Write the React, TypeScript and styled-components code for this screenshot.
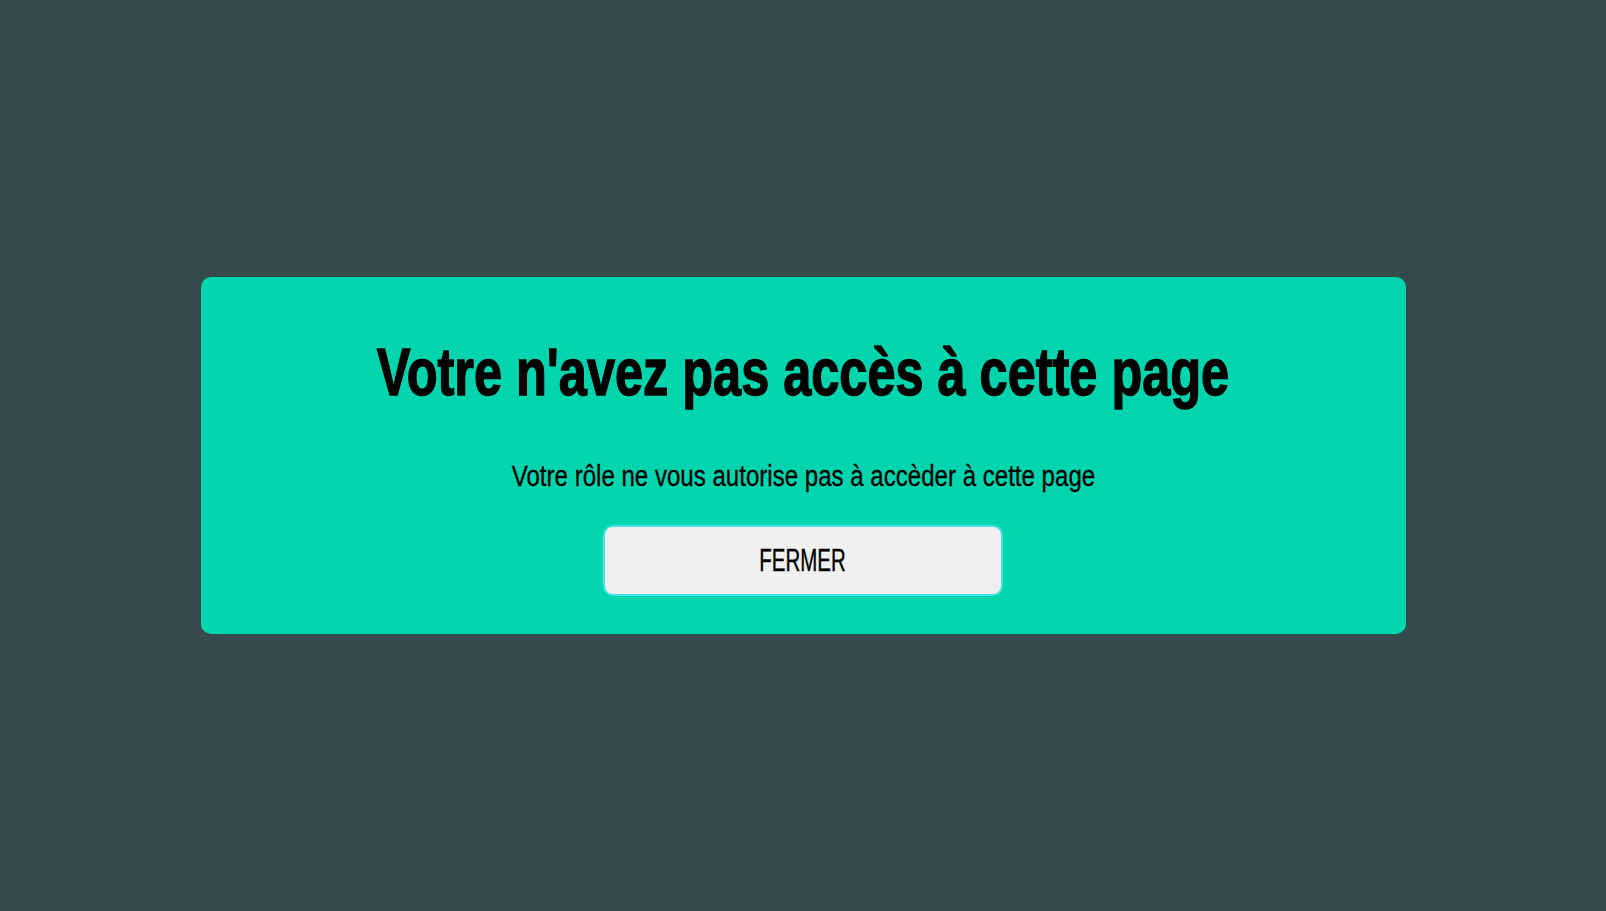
import styled, { createGlobalStyle } from "styled-components";

const GlobalStyle = createGlobalStyle`
  html, body {
    margin: 0;
    padding: 0;
    height: 100%;
  }
  body {
    background-color: #354a4a;
    font-family: "Liberation Sans", Arial, sans-serif;
  }
  #root {
    height: 100%;
  }
`;

export default function App() {
  return (
    <>
      <GlobalStyle />
      <Overlay>
        <Modal>
          <Title>
            <Narrow $scale={0.753}>Votre n'avez pas accès à cette page</Narrow>
          </Title>
          <Message>
            <Narrow $scale={0.83}>
              Votre rôle ne vous autorise pas à accèder à cette page
            </Narrow>
          </Message>
          <CloseButton type="button">
            <Narrow $scale={0.64}>FERMER</Narrow>
          </CloseButton>
        </Modal>
      </Overlay>
    </>
  );
}

const Overlay = styled.div`
  display: flex;
  align-items: center;
  justify-content: center;
  height: 100%;
`;

const Modal = styled.div`
  display: flex;
  flex-direction: column;
  align-items: center;
  width: 1205px;
  height: 357px;
  box-sizing: border-box;
  padding-top: 55px;
  background-color: #00d5ae;
  border-radius: 10px;
`;

// the original font is a tall condensed face, squeeze a regular one to match
const Narrow = styled.span<{ $scale: number }>`
  display: inline-block;
  white-space: nowrap;
  transform: scaleX(${({ $scale }) => $scale});
`;

const Title = styled.h1`
  margin: 0;
  font-size: 67px;
  font-weight: bold;
  line-height: 1.2;
  color: #000;
  -webkit-text-stroke: 1.5px #000;
`;

const Message = styled.p`
  margin: 47px 0 0;
  font-size: 29px;
  line-height: 1.2;
  color: #000;
  -webkit-text-stroke: 0.3px #000;
`;

const CloseButton = styled.button`
  display: flex;
  align-items: center;
  justify-content: center;
  margin-top: 31px;
  width: 400px;
  height: 71px;
  box-sizing: border-box;
  background-color: #f0f0f0;
  border: 2px solid #40e0e4;
  border-radius: 10px;
  font-family: inherit;
  font-size: 32px;
  color: #000;
  -webkit-text-stroke: 0.4px #000;
  cursor: pointer;
`;
